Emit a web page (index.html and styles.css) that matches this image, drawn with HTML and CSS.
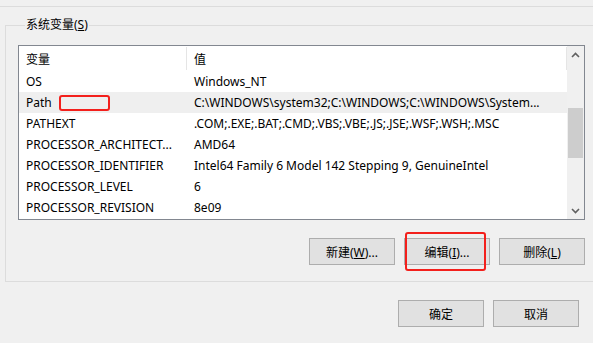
FILE: index.html
```html
<!DOCTYPE html>
<html lang="zh-CN">
<head>
    <meta charset="UTF-8">
    <meta name="viewport" content="width=device-width, initial-scale=1.0">
    <title>系统变量</title>
    <link rel="stylesheet" href="styles.css">
</head>
<body>
    <div class="top-line"></div>

    <fieldset class="group">
        <legend>系统变量(<u>S</u>)</legend>
        <div class="group-body">
            <div class="listbox">
                <div class="table">
                    <div class="row header">
                        <div class="cell name">变量</div>
                        <div class="cell value">值</div>
                    </div>
                    <div class="row">
                        <div class="cell name">OS</div>
                        <div class="cell value">Windows_NT</div>
                    </div>
                    <div class="row selected">
                        <div class="cell name">Path</div>
                        <div class="cell value">C:\WINDOWS\system32;C:\WINDOWS;C:\WINDOWS\System...</div>
                    </div>
                    <div class="row">
                        <div class="cell name">PATHEXT</div>
                        <div class="cell value">.COM;.EXE;.BAT;.CMD;.VBS;.VBE;.JS;.JSE;.WSF;.WSH;.MSC</div>
                    </div>
                    <div class="row">
                        <div class="cell name">PROCESSOR_ARCHITECT...</div>
                        <div class="cell value">AMD64</div>
                    </div>
                    <div class="row">
                        <div class="cell name">PROCESSOR_IDENTIFIER</div>
                        <div class="cell value">Intel64 Family 6 Model 142 Stepping 9, GenuineIntel</div>
                    </div>
                    <div class="row">
                        <div class="cell name">PROCESSOR_LEVEL</div>
                        <div class="cell value">6</div>
                    </div>
                    <div class="row">
                        <div class="cell name">PROCESSOR_REVISION</div>
                        <div class="cell value">8e09</div>
                    </div>
                </div>
                <div class="scrollbar">
                    <div class="arrow">
                        <svg width="9" height="6" viewBox="0 0 9 6"><path d="M1 5 L4.5 1.5 L8 5" fill="none" stroke="#606060" stroke-width="1.6"/></svg>
                    </div>
                    <div class="track"><div class="thumb"></div></div>
                    <div class="arrow">
                        <svg width="9" height="6" viewBox="0 0 9 6"><path d="M1 1 L4.5 4.5 L8 1" fill="none" stroke="#606060" stroke-width="1.6"/></svg>
                    </div>
                </div>
            </div>

            <div class="buttons">
                <button>新建(<u>W</u>)...</button>
                <button>编辑(<u>I</u>)...</button>
                <button>删除(<u>L</u>)</button>
            </div>
        </div>
    </fieldset>

    <div class="buttons footer">
        <button>确定</button>
        <button>取消</button>
    </div>

    <!-- red annotation boxes -->
    <div class="mark mark-path"></div>
    <div class="mark mark-edit"></div>
</body>
</html>
```

FILE: styles.css
```css
body {
    font-family: "Noto Sans", "Noto Sans CJK SC", sans-serif;
    font-size: 12px;
    color: #000;
    background-color: #f0f0f0;
    margin: 0;
    width: 593px;
    height: 343px;
    overflow: hidden;
    position: relative;
}

.top-line {
    height: 6px;
    border-bottom: 1px solid #dcdcdc;
}

.group {
    margin: 10px 0 0 5px;
    padding: 0 0 16px 12px;
    border: 1px solid #dcdcdc;
    border-right: none;
    min-width: 0;
}

.group legend {
    margin-left: 7px;
    padding: 0 1px;
    line-height: 16px;
}

.group-body {
    width: 567px;
    padding-top: 12px;
}

.listbox {
    display: flex;
    height: 173px;
    border: 1px solid #828790;
    background-color: #fff;
    overflow: hidden;
}

.table {
    width: 548px;
}

.row {
    display: flex;
    height: 21px;
    align-items: center;
}

.row.header {
    height: 25px;
    align-items: stretch;
}

.row.header .cell {
    display: flex;
    align-items: center;
    margin-top: 1px;
    margin-bottom: 1px;
    border-right: 1px solid #e5e5e5;
}

.row.selected {
    background-color: #efefef;
}

.cell {
    box-sizing: border-box;
    padding-left: 7px;
    padding-right: 8px;
    white-space: nowrap;
    overflow: hidden;
}

.cell.name {
    width: 168px;
}

.cell.value {
    flex: 1;
    padding-right: 12px;
}

.scrollbar {
    width: 17px;
    display: flex;
    flex-direction: column;
    background-color: #f0f0f0;
}

.arrow {
    height: 17px;
    display: flex;
    align-items: center;
    justify-content: center;
}

.track {
    flex: 1;
}

.thumb {
    margin: 45px 1px 0 1px;
    height: 50px;
    background-color: #cdcdcd;
}

.buttons {
    display: flex;
    justify-content: flex-end;
    gap: 9px;
    margin-top: 18px;
}

.buttons button {
    width: 86px;
    height: 27px;
    font-family: inherit;
    font-size: 12px;
    color: #000;
    background-color: #e1e1e1;
    border: 1px solid #adadad;
    border-radius: 0;
    padding: 0;
}

.footer {
    margin-top: 18px;
    margin-right: 14px;
}

.mark {
    position: absolute;
    border: 2px solid #f3201c;
    border-radius: 3px;
}

.mark-path {
    left: 59px;
    top: 95px;
    width: 47px;
    height: 12px;
}

.mark-edit {
    left: 405px;
    top: 232px;
    width: 77px;
    height: 35px;
}
```
